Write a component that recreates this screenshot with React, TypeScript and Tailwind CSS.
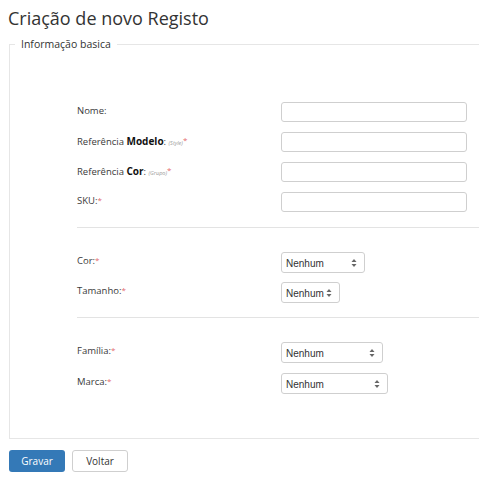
import React from "react";

const Req = () => <span className="align-top text-[8px] leading-[12px] text-[#e46a6a]">*</span>;

const SelectArrow = () => (
  <svg width="6" height="9" viewBox="0 0 6 9" className="absolute right-[7px] top-1/2 -translate-y-1/2">
    <path d="M3 0.5 L5.5 3.5 H0.5 Z" fill="#666" />
    <path d="M3 8.5 L5.5 5.5 H0.5 Z" fill="#666" />
  </svg>
);

const Select = ({ w }: { w: string }) => (
  <div className={`relative h-[21px] ${w} rounded-[3px] border border-[#cfcfcf] bg-white`}>
    <span className="absolute left-[4px] top-1/2 -translate-y-1/2 text-[10px] text-[#333] [font-family:'Liberation_Sans',Arial,sans-serif]">
      Nenhum
    </span>
    <SelectArrow />
  </div>
);

const Input = () => (
  <div className="h-[20px] w-[186px] rounded-[3px] border border-[#cfcfcf] bg-white" />
);

const Row = ({ label, children, h }: { label: React.ReactNode; children: React.ReactNode; h: string }) => (
  <div className={`flex ${h}`}>
    <div className="w-[204px] pt-[2px] text-[9.5px] leading-[14px] text-[#3a3a3a]">{label}</div>
    <div>{children}</div>
  </div>
);

export default function App() {
  return (
    <div className="w-[479px] h-[479px] overflow-hidden bg-white [font-family:'Open_Sans','Noto_Sans',sans-serif] text-[#333]">
      <h1 className="pl-[8px] pt-[6px] text-[18px] leading-[24px] text-[#333]">Criação de novo Registo</h1>
      <fieldset className="ml-[9px] mt-[7px] border border-r-0 border-[#e6e6e6] p-0 pb-[44px]">
        <legend className="ml-[5px] px-[6px] text-[10.5px] leading-[15px] text-[#333]">Informação basica</legend>
        <div className="pl-[67px] pt-[50px]">
          <div className="flex flex-col gap-[10px]">
            <Row h="h-[20px]" label={<>Nome:</>}>
              <Input />
            </Row>
            <Row
              h="h-[20px]"
              label={
                <>
                  Referência <b className="font-bold text-[10px] text-[#111]">Modelo</b>:{" "}
                  <i className="text-[5.5px] text-[#999]">(Style)</i>
                  <Req />
                </>
              }
            >
              <Input />
            </Row>
            <Row
              h="h-[20px]"
              label={
                <>
                  Referência <b className="font-bold text-[10px] text-[#111]">Cor</b>:{" "}
                  <i className="text-[5.5px] text-[#999]">(Grupo)</i>
                  <Req />
                </>
              }
            >
              <Input />
            </Row>
            <Row h="h-[20px]" label={<>SKU:<Req /></>}>
              <Input />
            </Row>
          </div>
          <div className="mt-[15px] h-px bg-[#e3e3e3]" />
          <div className="mt-[24px] flex flex-col gap-[9px]">
            <Row h="h-[21px]" label={<>Cor:<Req /></>}>
              <Select w="w-[84px]" />
            </Row>
            <Row h="h-[21px]" label={<>Tamanho:<Req /></>}>
              <Select w="w-[59px]" />
            </Row>
          </div>
          <div className="mt-[14px] h-px bg-[#e3e3e3]" />
          <div className="mt-[24px] flex flex-col gap-[10px]">
            <Row h="h-[21px]" label={<>Família:<Req /></>}>
              <Select w="w-[102px]" />
            </Row>
            <Row h="h-[21px]" label={<>Marca:<Req /></>}>
              <Select w="w-[107px]" />
            </Row>
          </div>
        </div>
      </fieldset>
      <div className="ml-[9px] mt-[11px] flex gap-[7px]">
        <button className="h-[22px] w-[56px] rounded-[3px] bg-[#3479b7] text-[10px] text-white">Gravar</button>
        <button className="h-[22px] w-[56px] rounded-[3px] border border-[#cfcfcf] bg-white text-[10px] text-[#333]">
          Voltar
        </button>
      </div>
    </div>
  );
}
